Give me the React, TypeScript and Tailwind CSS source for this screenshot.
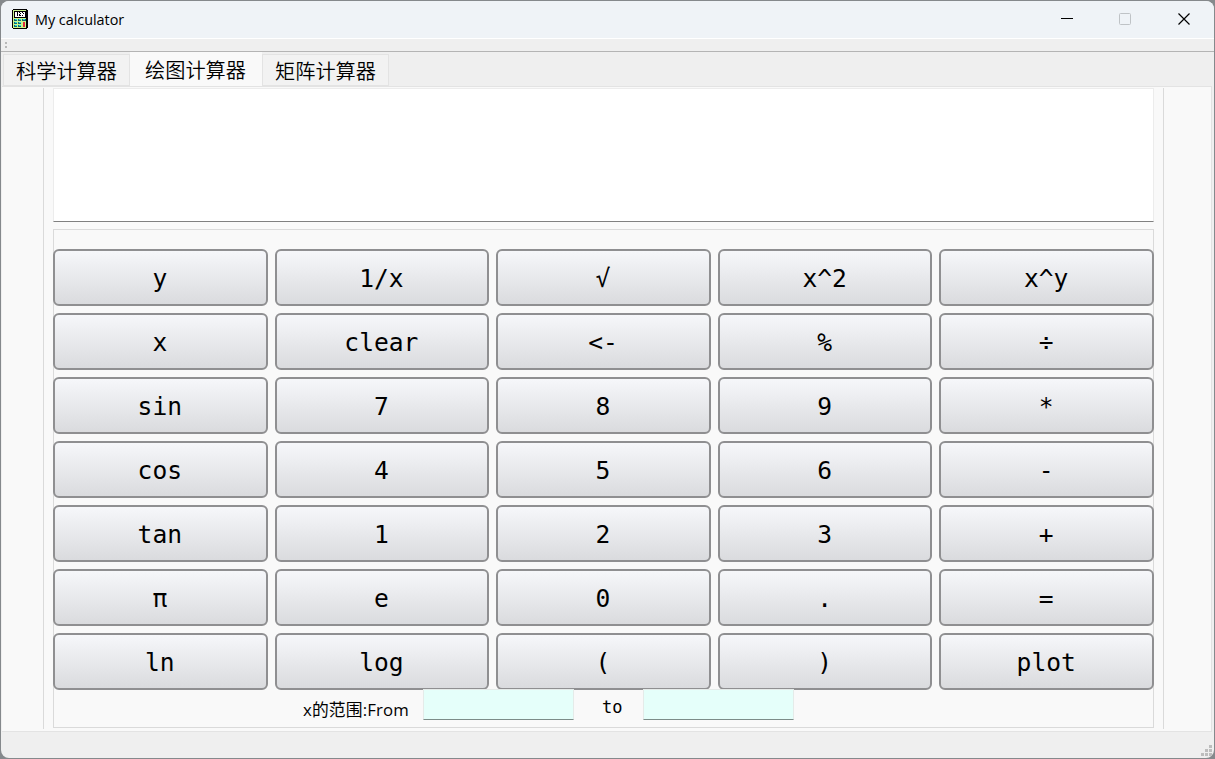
import React from "react";

const keys = [
  "y", "1/x", "√", "x^2", "x^y",
  "x", "clear", "<-", "%", "÷",
  "sin", "7", "8", "9", "*",
  "cos", "4", "5", "6", "-",
  "tan", "1", "2", "3", "+",
  "π", "e", "0", ".", "=",
  "ln", "log", "(", ")", "plot",
];

function AppIcon() {
  return (
    <svg width="16" height="20" viewBox="0 0 16 20" shapeRendering="crispEdges">
      <path d="M1 0h14v1h1v18h-1v1H1v-1H0V1h1z" fill="#000" />
      <path d="M1 1h13v18H1z" fill="#c8f58c" />
      <path d="M2 2h12v7H2z" fill="#000" />
      <path d="M3 3h10v5H3z" fill="#fff" />
      <path d="M5 3h1v4H5zM7 3h1v1H7zM8 4h1v1H8zM7 5h1v2H7zM8 6h1v1H8zM10 3h1v1h-1zM11 4h1v1h-1zM10 6h1v1h-1z" fill="#000" />
      <path d="M2 10h3v2H2zM6 10h3v2H6zM10 10h4v2h-4zM2 13h3v2H2zM6 13h3v2H6zM2 16h3v2H2zM6 16h3v2H6z" fill="#12636c" />
      <path d="M3 10h2v1H3zM7 10h2v1H7zM11 10h2v1h-2zM3 13h2v1H3zM7 13h2v1H7zM3 16h2v1H3zM7 16h2v1H7z" fill="#19dbe7" />
      <path d="M11 13h2v5h-2z" fill="#e12b3c" />
    </svg>
  );
}

function TitleBar() {
  return (
    <header className="flex h-[37px] shrink-0 items-start justify-between bg-[#eff3f7]">
      <div className="flex pt-2 pl-[11px]">
        <AppIcon />
        <span className="ml-[7px] text-[14.4px] leading-[21px] tracking-[-0.02px]">My calculator</span>
      </div>
      <svg className="mr-[21px] mt-[11px]" width="133" height="14" viewBox="0 0 133 14" fill="none">
        <path d="M1 6.5h12" stroke="#000" />
        <rect x="59.5" y="1.5" width="11" height="11" rx="1" stroke="#bfc3c6" />
        <path d="M118.5 1.5l11 11m0-11l-11 11" stroke="#000" strokeWidth="1.2" />
      </svg>
    </header>
  );
}

export default function App() {
  return (
    <div className="h-[759px] w-[1215px] overflow-hidden bg-[#85898c] p-px font-['Open_Sans','Noto_Sans_CJK_SC',sans-serif] text-black">
      <div className="flex h-[757px] w-[1213px] flex-col overflow-hidden rounded-[8px] bg-[#efefef]">
        <TitleBar />
        <div className="h-[14px] shrink-0 border-t border-b border-t-white border-b-[#b4b4b4] pt-[3px] pl-[4px]">
          <svg width="3" height="7" viewBox="0 0 3 7" fill="#b8b8b8" shapeRendering="crispEdges">
            <path d="M0 0h2v2H0zM0 4h2v2H0z" />
          </svg>
        </div>
        <nav className="flex h-[34px] shrink-0 items-end pl-[2px] font-['Noto_Sans_CJK_SC',sans-serif] text-[20.2px] font-[350]">
          <div className="h-[32px] w-[127px] border border-[#e3e3e3] bg-[#f2f2f2] pl-[12px] leading-[32px]">科学计算器</div>
          <div className="h-[34px] w-[132px] bg-[#f9f9f9] pl-[15px] leading-[36px]">绘图计算器</div>
          <div className="h-[32px] w-[127px] border border-[#e3e3e3] bg-[#f2f2f2] pl-[12px] leading-[32px]">矩阵计算器</div>
        </nav>
        <main className="mr-[2px] ml-px flex h-[646px] shrink-0 border-t border-r border-b border-[#e3e3e3] bg-[#f9f9f9]">
          <div className="mt-px ml-[41px] h-[641px] w-[1121px] shrink-0 border-r border-l border-[#dadada] px-[9px]">
            <div className="h-[134px] w-[1101px] border border-[#ececec] border-b-[#808080] bg-white" />
            <section className="mt-[7px] h-[499px] w-[1101px] border border-[#dadada] pt-[19px]">
              <div className="-mx-px grid w-[1101px] grid-cols-5 gap-x-[7px] gap-y-[7px]">
                {keys.map((key) => (
                  <button
                    key={key}
                    className="h-[57px] rounded-[6px] border-2 border-[#8f8f91] bg-linear-to-b from-[#f6f7fa] to-[#dadbde] pt-[3px] pr-px font-['DejaVu_Sans_Mono',monospace] text-[24.6px] leading-[50px]"
                  >
                    {key}
                  </button>
                ))}
              </div>
              <div className="relative -mt-px flex h-[31px] pl-[249px]">
                <span className="w-[120px] pt-[10px] text-[16.8px] leading-[21px] tracking-[0.15px] whitespace-nowrap">x的范围:From</span>
                <div className="h-[31px] w-[151px] border border-[#e5ebe9] border-b-[#7c8c88] bg-[#e5fffa]" />
                <span className="w-[69px] pt-[8px] pl-[28px] font-['DejaVu_Sans_Mono',monospace] text-[17px] leading-[21px]">to</span>
                <div className="h-[31px] w-[151px] border border-[#e5ebe9] border-b-[#7c8c88] bg-[#e5fffa]" />
              </div>
            </section>
          </div>
        </main>
        <footer className="flex flex-1 items-end justify-end pr-[2px] pb-[2px]">
          <svg width="11" height="12" viewBox="0 0 11 12" fill="#bdbdbd" shapeRendering="crispEdges">
            <path d="M8 1h3v3H8zM4 5h3v3H4zM8 5h3v3H8zM0 9h3v3H0zM4 9h3v3H4zM8 9h3v3H8z" />
          </svg>
        </footer>
      </div>
    </div>
  );
}
